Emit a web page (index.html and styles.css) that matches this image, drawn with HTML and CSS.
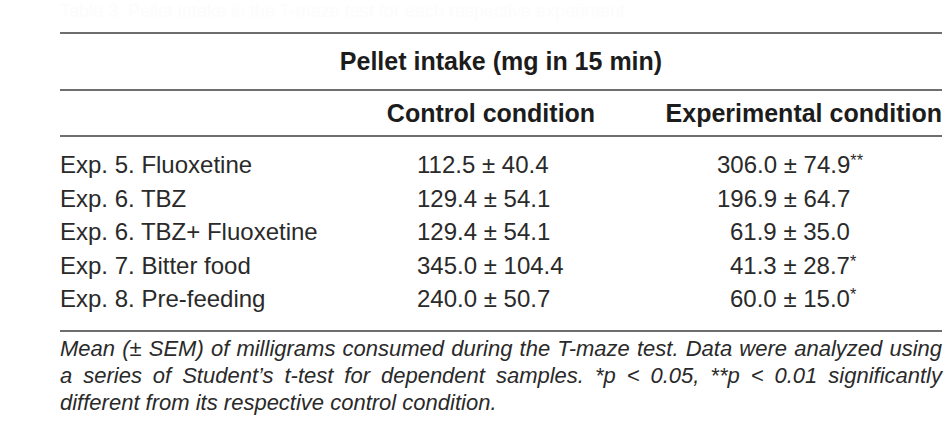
FILE: index.html
```html
<!DOCTYPE html>
<html lang="en">
<head>
<meta charset="utf-8">
<title>Pellet intake table</title>
<link rel="stylesheet" href="styles.css">
</head>
<body>
<div class="page">
  <p class="ghost">Table 3. Pellet intake in the T-maze test for each respective experiment.</p>
  <table class="data">
    <colgroup>
      <col class="c1">
      <col class="c2">
      <col class="c3">
    </colgroup>
    <thead>
      <tr class="title-row">
        <th colspan="3">Pellet intake (mg in 15 min)</th>
      </tr>
      <tr class="head-row">
        <th></th>
        <th class="h2">Control condition</th>
        <th class="h3">Experimental condition</th>
      </tr>
    </thead>
    <tbody>
      <tr class="first">
        <td>Exp. 5. Fluoxetine</td>
        <td class="v2">112.5 ± 40.4</td>
        <td class="v3">306.0 ± 74.9<sup>**</sup></td>
      </tr>
      <tr>
        <td>Exp. 6. TBZ</td>
        <td class="v2">129.4 ± 54.1</td>
        <td class="v3">196.9 ± 64.7</td>
      </tr>
      <tr>
        <td>Exp. 6. TBZ+ Fluoxetine</td>
        <td class="v2">129.4 ± 54.1</td>
        <td class="v3 short">61.9 ± 35.0</td>
      </tr>
      <tr>
        <td>Exp. 7. Bitter food</td>
        <td class="v2">345.0 ± 104.4</td>
        <td class="v3 short">41.3 ± 28.7<sup>*</sup></td>
      </tr>
      <tr class="last">
        <td>Exp. 8. Pre-feeding</td>
        <td class="v2">240.0 ± 50.7</td>
        <td class="v3 short">60.0 ± 15.0<sup>*</sup></td>
      </tr>
    </tbody>
  </table>
  <p class="caption">Mean (± SEM) of milligrams consumed during the T-maze test. Data were analyzed using a series of Student’s t-test for dependent samples. *p &lt; 0.05, **p &lt; 0.01 significantly different from its respective control condition.</p>
</div>
</body>
</html>
```

FILE: styles.css
```css
html, body {
  margin: 0;
  padding: 0;
  background: #ffffff;
}

.page {
  width: 882px;
  padding: 0 8px 0 60px;
  font-family: "Liberation Sans", Arial, sans-serif;
  color: #2a2a2a;
}

.ghost {
  margin: 0;
  height: 32px;
  line-height: 22px;
  font-size: 18px;
  color: #fcfcfc;
  white-space: nowrap;
  overflow: hidden;
}

.data {
  width: 882px;
  border-collapse: collapse;
  border-top: 2px solid #6e6e6e;
  border-bottom: 2px solid #6e6e6e;
  font-size: 24px;
}

.c1 { width: 258px; }
.c2 { width: 346px; }
.c3 { width: 278px; }

.data th,
.data td {
  padding: 0;
}

.title-row th {
  height: 55px;
  text-align: center;
  font-size: 25px;
  font-weight: bold;
  color: #1c1c1c;
  border-bottom: 2px solid #6e6e6e;
  vertical-align: middle;
}

.head-row th {
  height: 44px;
  font-size: 25px;
  font-weight: bold;
  color: #1c1c1c;
  border-bottom: 2px solid #6e6e6e;
  vertical-align: middle;
}

.h2 { text-align: center; }
.h3 { text-align: right; padding-right: 2px; }

.data tbody td {
  height: 33.5px;
  line-height: 33.5px;
  vertical-align: middle;
  text-align: left;
}

.data tbody tr.first td { padding-top: 11px; }
.data tbody tr.last td { padding-bottom: 14px; }

.data tbody td.v2 { padding-left: 99px; }
.data tbody td.v3 { padding-left: 53px; }
.data tbody td.v3.short { padding-left: 66px; }

sup {
  font-size: 0.68em;
  line-height: 0;
  vertical-align: 0.45em;
}

.caption {
  margin: 3px 0 0 0;
  font-size: 22px;
  line-height: 27px;
  font-style: italic;
  text-align: justify;
  color: #2a2a2a;
}
```
